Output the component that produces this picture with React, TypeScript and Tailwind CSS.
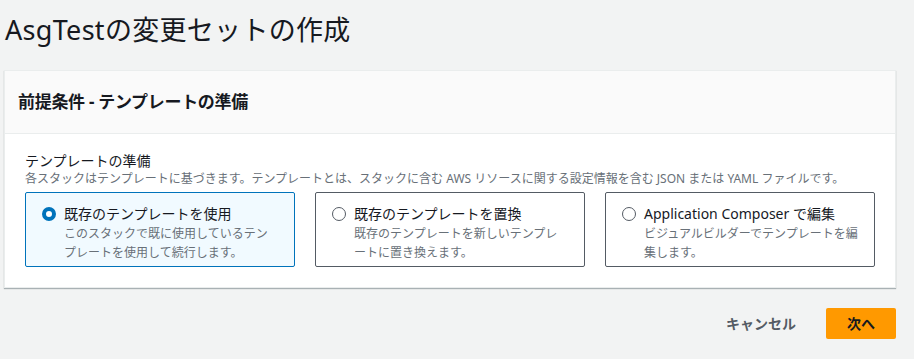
import React from "react"

const font = { fontFamily: '"Noto Sans", "Noto Sans CJK JP", sans-serif' }

type Option = {
  title: string
  desc: string[]
  selected?: boolean
}

const options: Option[] = [
  { title: "既存のテンプレートを使用", desc: ["このスタックで既に使用しているテン", "プレートを使用して続行します。"], selected: true },
  { title: "既存のテンプレートを置換", desc: ["既存のテンプレートを新しいテンプレ", "ートに置き換えます。"] },
  { title: "Application Composer で編集", desc: ["ビジュアルビルダーでテンプレートを編", "集します。"] },
]

function Tile({ title, desc, selected }: Option) {
  return (
    <div
      className={
        selected
          ? "flex gap-[8px] rounded-[2px] border border-[#0073bb] bg-[#f1faff] pl-[16px] pr-[8px] pt-[11px] h-[75px]"
          : "flex gap-[8px] rounded-[2px] border border-[#545b64] bg-white pl-[16px] pr-[8px] pt-[11px] h-[75px]"
      }
    >
      <div className="pt-[3px]">
        {selected ? (
          <div className="w-[14px] h-[14px] rounded-full border-[4px] border-[#0073bb] bg-white" />
        ) : (
          <div className="w-[14px] h-[14px] rounded-full border-[1.5px] border-[#545b64] bg-white" />
        )}
      </div>
      <div className="flex flex-col">
        <div className="text-[14px] leading-[20px] text-[#16191f]">{title}</div>
        {desc.map((line) => (
          <div key={line} className="text-[12px] leading-[19px] text-[#687078] whitespace-nowrap">
            {line}
          </div>
        ))}
      </div>
    </div>
  )
}

export default function App() {
  return (
    <div className="w-[914px] h-[359px] bg-[#f2f3f3] overflow-hidden" style={font}>
      <h1 className="pl-[5px] pt-[12px] text-[27px] leading-[36px] text-[#16191f] tracking-[0.3px]">
        AsgTestの変更セットの作成
      </h1>

      <div className="ml-[4px] mr-[18px] mt-[22px] bg-white border border-[#eaeded] shadow-[0_1px_1px_0_rgba(0,28,36,0.3)]">
        <div className="h-[63px] bg-[#fafafa] border-b border-[#eaeded] flex items-center pl-[13px]">
          <h2 className="text-[17px] font-bold text-[#16191f] tracking-[-0.3px]">前提条件 - テンプレートの準備</h2>
        </div>
        <div className="px-[20px] pt-[17px] pb-[20px]">
          <div className="text-[14px] leading-[20px] text-[#16191f]">テンプレートの準備</div>
          <div className="text-[12px] leading-[16px] text-[#687078]">
            各スタックはテンプレートに基づきます。テンプレートとは、スタックに含む AWS リソースに関する設定情報を含む JSON または YAML ファイルです。
          </div>
          <div className="grid grid-cols-3 gap-[20px] mt-[5px]">
            {options.map((o) => (
              <Tile key={o.title} {...o} />
            ))}
          </div>
        </div>
      </div>

      <div className="flex justify-end items-center gap-[30px] mr-[18px] mt-[20px]">
        <button className="text-[14px] font-bold text-[#545b64]">キャンセル</button>
        <button className="w-[70px] h-[31px] rounded-[2px] bg-[#ff9900] text-[14px] font-bold text-[#16191f]">次へ</button>
      </div>
    </div>
  )
}
